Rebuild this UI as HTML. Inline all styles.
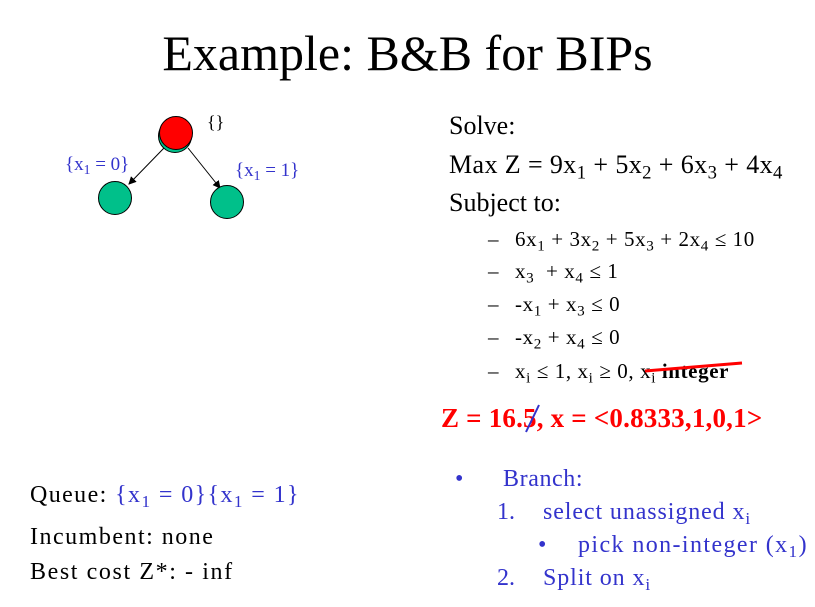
<!DOCTYPE html>
<html><head><style>
body{margin:0;width:815px;height:607px;background:#fff;position:relative;overflow:hidden;font-family:"Liberation Serif",serif;color:#000}
.a{position:absolute;white-space:nowrap;line-height:1}
.b{color:#3333cc}
sub{font-size:72%;vertical-align:-0.3em;line-height:0}
.r{font-size:21px;letter-spacing:0.6px}
</style></head><body>
<div class="a" style="left:0;width:815px;text-align:center;top:28px;font-size:50px">Example: B&amp;B for BIPs</div>
<svg class="a" style="left:0;top:0" width="815" height="607">
<defs><marker id="m" markerWidth="8" markerHeight="8" refX="7" refY="4" orient="auto"><path d="M0,0L8,4L0,8z" fill="#000"/></marker></defs>
<line x1="164" y1="148" x2="129" y2="184" stroke="#000" stroke-width="1" marker-end="url(#m)"/>
<line x1="188" y1="148" x2="220" y2="188" stroke="#000" stroke-width="1" marker-end="url(#m)"/>
<circle cx="175" cy="136" r="16.5" fill="#00c08a" stroke="#000"/>
<circle cx="176" cy="133" r="16.5" fill="#ff0000" stroke="#000"/>
<circle cx="115" cy="198" r="16.5" fill="#00c08a" stroke="#000"/>
<circle cx="227" cy="202" r="16.5" fill="#00c08a" stroke="#000"/>
</svg>
<div class="a" style="left:207px;top:113px;font-size:18px">{}</div>
<div class="a b" style="left:65px;top:155px;font-size:19px">{x<sub>1</sub> = 0}</div>
<div class="a b" style="left:235px;top:161px;font-size:19px">{x<sub>1</sub> = 1}</div>

<div class="a" style="left:449px;top:113px;font-size:26px">Solve:</div>
<div class="a" style="left:449px;top:152px;font-size:26px;letter-spacing:0.4px">Max Z = 9x<sub>1</sub> + 5x<sub>2</sub> + 6x<sub>3</sub> + 4x<sub>4</sub></div>
<div class="a" style="left:449px;top:190px;font-size:26px">Subject to:</div>
<div class="a r" style="left:488px;top:229px">–</div><div class="a r" style="left:515px;top:229px">6x<sub>1</sub> + 3x<sub>2</sub> + 5x<sub>3</sub> + 2x<sub>4</sub> ≤ 10</div>
<div class="a r" style="left:488px;top:261px">–</div><div class="a r" style="left:515px;top:261px">x<sub>3</sub> &nbsp;+ x<sub>4</sub> ≤ 1</div>
<div class="a r" style="left:488px;top:294px">–</div><div class="a r" style="left:515px;top:294px">-x<sub>1</sub> + x<sub>3</sub> ≤ 0</div>
<div class="a r" style="left:488px;top:327px">–</div><div class="a r" style="left:515px;top:327px">-x<sub>2</sub> + x<sub>4</sub> ≤ 0</div>
<div class="a r" style="left:488px;top:361px">–</div><div class="a r" style="left:515px;top:361px">x<sub>i</sub> ≤ 1, x<sub>i</sub> ≥ 0, x<sub>i</sub> <b>integer</b></div>
<div class="a" style="left:441px;top:405px;font-size:27px;color:#f00;font-weight:bold;letter-spacing:0.2px">Z = 16.5, x = &lt;0.8333,1,0,1&gt;</div>
<svg class="a" style="left:0;top:0" width="815" height="607">
<line x1="645" y1="371" x2="742" y2="363" stroke="#ff0000" stroke-width="3"/>
<line x1="526" y1="432" x2="539" y2="405" stroke="#3333cc" stroke-width="2"/>
</svg>

<div class="a b" style="left:455px;top:467px;font-size:24px">•</div>
<div class="a b" style="left:503px;top:467px;font-size:24px;letter-spacing:0.6px">Branch:</div>
<div class="a b" style="left:497px;top:500px;font-size:24px">1.</div>
<div class="a b" style="left:543px;top:500px;font-size:24px;letter-spacing:0.9px">select unassigned x<sub>i</sub></div>
<div class="a b" style="left:538px;top:533px;font-size:24px">•</div>
<div class="a b" style="left:578px;top:533px;font-size:24px;letter-spacing:1.4px">pick non-integer (x<sub>1</sub>)</div>
<div class="a b" style="left:497px;top:566px;font-size:24px">2.</div>
<div class="a b" style="left:543px;top:566px;font-size:24px;letter-spacing:0.9px">Split on x<sub>i</sub></div>

<div class="a" style="left:30px;top:483px;font-size:24px;letter-spacing:1.4px">Queue: <span class="b">{x<sub>1</sub> = 0}{x<sub>1</sub> = 1}</span></div>
<div class="a" style="left:30px;top:525px;font-size:24px;letter-spacing:1.5px">Incumbent: none</div>
<div class="a" style="left:30px;top:560px;font-size:24px;letter-spacing:1.6px">Best cost Z*: - inf</div>
</body></html>
